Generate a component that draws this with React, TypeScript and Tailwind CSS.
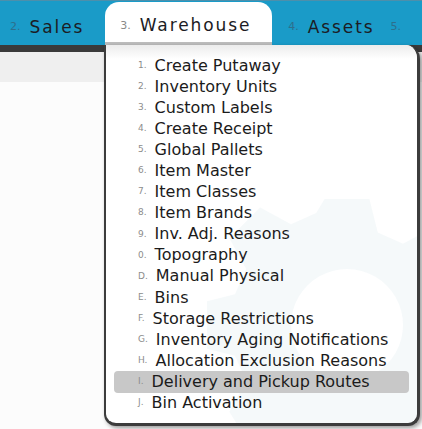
import React from "react";

const items: [string, string][] = [
  ["1.", "Create Putaway"],
  ["2.", "Inventory Units"],
  ["3.", "Custom Labels"],
  ["4.", "Create Receipt"],
  ["5.", "Global Pallets"],
  ["6.", "Item Master"],
  ["7.", "Item Classes"],
  ["8.", "Item Brands"],
  ["9.", "Inv. Adj. Reasons"],
  ["0.", "Topography"],
  ["D.", "Manual Physical"],
  ["E.", "Bins"],
  ["F.", "Storage Restrictions"],
  ["G.", "Inventory Aging Notifications"],
  ["H.", "Allocation Exclusion Reasons"],
  ["I.", "Delivery and Pickup Routes"],
  ["J.", "Bin Activation"],
];

function Tab({
  num,
  label,
  active,
  className = "",
}: {
  num: string;
  label: string;
  active?: boolean;
  className?: string;
}) {
  return (
    <div
      className={`flex items-center h-[43px] pt-[8px] ${className} ${
        active ? "bg-white rounded-t-[14px] border-b-[3px] border-[#bdbdbd] pl-[15px] w-[167px]" : ""
      }`}
    >
      <span className={`text-[11px] mr-[9px] ${active ? "text-[#8a8a8a]" : "text-[#2d6f8c]"}`}>{num}</span>
      <span className="text-[17px] tracking-[1.9px] text-[#1c1c24]">{label}</span>
    </div>
  );
}

export default function App() {
  return (
    <div
      className="relative w-[422px] h-[429px] overflow-hidden bg-[#fcfcfc]"
      style={{ fontFamily: "'DejaVu Sans', Verdana, sans-serif" }}
    >
      {/* Top nav */}
      <div className="h-[45px] bg-[#1a9bc8] border-t border-[#4d8fab] flex items-end">
        <div className="flex items-end pl-[10px] gap-[16px]">
          <Tab num="2." label="Sales" className="mr-[5px]" />
          <Tab num="3." label="Warehouse" active />
          <Tab num="4." label="Assets" />
          <Tab num="5." label="" />
        </div>
      </div>
      <div className="h-[7px] bg-[#3a3a3a]" />
      <div className="h-[30px] bg-[#efefef]" />

      {/* Dropdown menu */}
      <div className="absolute left-[104px] top-[45px] w-[316px] h-[381px] bg-white rounded-b-[12px] rounded-tr-[14px] border-l-2 border-r-[3px] border-b-[3px] border-[#3c3c3c] shadow-[2px_2px_4px_rgba(0,0,0,0.4)] overflow-hidden">
        <div className="absolute inset-x-0 top-0 h-[14px] bg-gradient-to-b from-[#ececec] to-white" />
        <svg className="absolute right-[-70px] top-[140px]" width="280" height="280" viewBox="0 0 100 100">
          <path
            d="M42 5h16l3 12 9 4 11-6 11 11-6 11 4 9 12 3v16l-12 3-4 9 6 11-11 11-11-6-9 4-3 12H42l-3-12-9-4-11 6L8 81l6-11-4-9-12-3V42l12-3 4-9-6-11L19 8l11 6 9-4z M50 30a20 20 0 1 0 0.01 0z"
            fill="#dfeaf0"
            fillRule="evenodd"
            opacity="0.3"
          />
        </svg>
        <ul className="relative pt-[10px] pl-[8px] pr-[8px]">
          {items.map(([n, t], i) => (
            <li
              key={n}
              className={`flex items-center h-[21.1px] rounded-[4px] ${
                i === 15 ? "bg-[#c8c8c8]" : ""
              }`}
            >
              <span className="text-[9px] text-[#8c8c8c] pl-[24px] mr-[8px]">{n}</span>
              <span className="text-[16px] text-[#1b1b1b] leading-none">{t}</span>
            </li>
          ))}
        </ul>
      </div>
    </div>
  );
}
